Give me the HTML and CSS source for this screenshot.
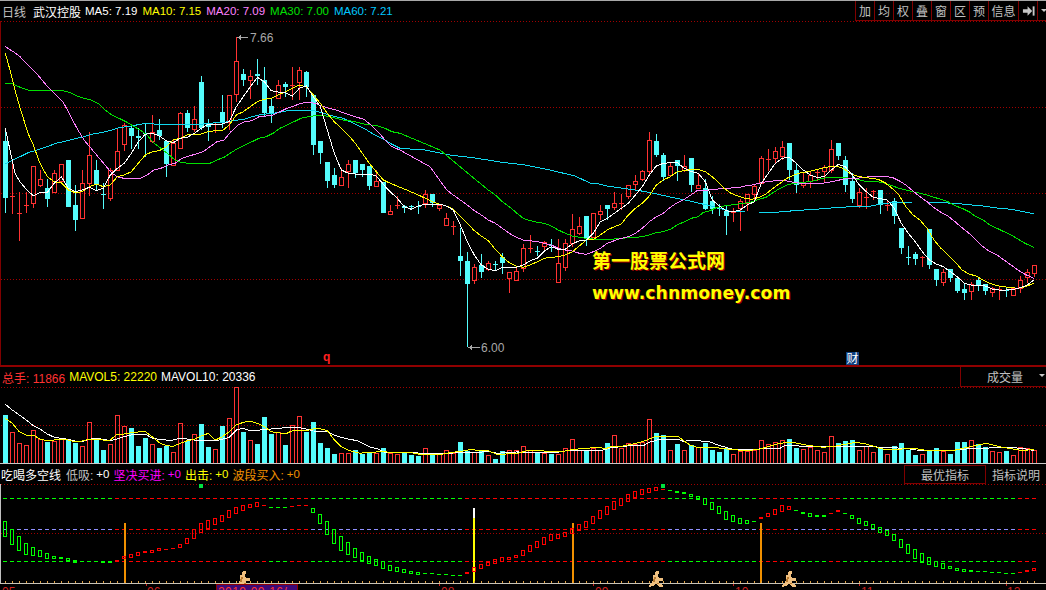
FILE: index.html
```html
<!DOCTYPE html>
<html lang="zh">
<head>
<meta charset="utf-8">
<title>武汉控股 日线</title>
<link rel="stylesheet" href="styles.css">
</head>
<body>
<div class="screen">
  <section class="pane pane-main">
    <header class="head">
      <span class="muted period">日线</span>
      <span class="name">武汉控股</span>
      <span class="c-white ma first">MA5: 7.19</span>
      <span class="c-yellow ma">MA10: 7.15</span>
      <span class="c-pink ma">MA20: 7.09</span>
      <span class="c-green ma">MA30: 7.00</span>
      <span class="c-blue ma">MA60: 7.21</span>
      <nav class="tools">
        <button class="tool">加</button>
        <button class="tool">均</button>
        <button class="tool">权</button>
        <button class="tool">叠</button>
        <button class="tool">窗</button>
        <button class="tool">区</button>
        <button class="tool">预</button>
        <button class="tool tool-wide">信息</button>
        <button class="tool" aria-label="next"><svg class="glyph" viewBox="0 0 14 12"><path d="M1 4h5V1l5 5-5 5V8H1z"/><path d="M11.5 1h2v10h-2z"/></svg></button>
        <button class="tool tool-end" aria-label="menu"><svg class="glyph-small" viewBox="0 0 8 4"><path d="M0 0h8L4 4z"/></svg></button>
      </nav>
    </header>
    <svg id="chart-main" class="chart chart-main" viewBox="0 21 1046 344"></svg>
    <div class="brand">
      <div class="brand-title">第一股票公式网</div>
      <div class="brand-url">www.chnmoney.com</div>
    </div>
  </section>

  <section class="pane pane-vol">
    <header class="head head-vol">
      <span class="c-red">总手: 11866</span>
      <span class="c-yellow">MAVOL5: 22220</span>
      <span class="c-white">MAVOL10: 20336</span>
      <button class="select">成交量<svg class="select-arrow" viewBox="0 0 8 4"><path d="M0 0h8L4 4z"/></svg></button>
    </header>
    <svg id="chart-vol" class="chart chart-vol" viewBox="0 387 1046 76"></svg>
  </section>

  <section class="pane pane-ind">
    <header class="head head-ind">
      <span class="ind-name">吃喝多空线</span>
      <span class="muted low">低吸:</span><span class="c-white val">+0</span>
      <span class="c-magenta">坚决买进:</span><span class="c-magenta val">+0</span>
      <span class="c-yellow">出击:</span><span class="c-yellow val">+0</span>
      <span class="c-orange">波段买入:</span><span class="c-orange val">+0</span>
      <div class="ind-buttons">
        <button class="ind-btn boxed">最优指标</button>
        <button class="ind-btn">指标说明</button>
      </div>
    </header>
    <svg id="chart-ind" class="chart chart-ind" viewBox="0 484 1046 106"></svg>
  </section>
</div>
<script src="script.js"></script>
</body>
</html>
```
FILE: styles.css
```css
* { box-sizing: border-box; }
html, body { margin: 0; padding: 0; background: #000; }
body {
  width: 1046px;
  height: 590px;
  overflow: hidden;
  font-family: "Liberation Sans", "Noto Sans CJK SC", sans-serif;
  font-size: 11.5px;
  color: #c0c0c0;
}
.screen {
  display: flex;
  flex-direction: column;
  width: 1046px;
  height: 590px;
  border-top: 1px solid #a8a8a8;
}
.pane { position: relative; display: flex; flex-direction: column; flex: none; }
.pane-main { height: 366px; border-bottom: 2px solid #900000; }
.pane-vol { height: 97px; border-bottom: 1px solid #c8c8c8; }
.pane-ind { height: 126px; }

.head {
  display: flex;
  align-items: center;
  height: 20px;
  flex: none;
  gap: 5px;
  white-space: nowrap;
  padding-left: 2px;
}
.chart { display: block; flex: none; width: 1046px; }
.chart-main { height: 344px; }
.chart-vol { height: 76px; }
.chart-ind { height: 106px; }

.muted { color: #c0c0c0; }
.name { color: #fff; font-size: 12px; }
.period { font-size: 12px; margin-right: 2px; }
.ma.first { margin-left: -1px; }
.c-white { color: #fff; }
.c-yellow { color: #ff0; }
.c-pink { color: #ff80ff; }
.c-green { color: #00e000; }
.c-blue { color: #00c8ff; }
.c-red { color: #ff3232; }
.c-magenta { color: #f0f; }
.c-orange { color: #f09000; }

.tools { display: flex; margin-left: auto; height: 20px; }
.tool {
  width: 19px;
  height: 20px;
  padding: 0;
  border: 0;
  border-left: 1px solid #800000;
  border-bottom: 1px solid #800000;
  background: #000;
  color: #c0c0c0;
  font: 12px "Noto Sans CJK SC", sans-serif;
  display: flex;
  align-items: center;
  justify-content: center;
}
.tool-wide { width: 30px; }
.tool-end { width: 9px; justify-content: flex-start; padding-left: 3px; }
.glyph { width: 13px; height: 12px; fill: #c8c8c8; }
.glyph-small { width: 6px; height: 3px; fill: #c8c8c8; flex: none; }

.head-vol { gap: 4px; font-size: 12px; }
.select {
  margin-left: auto;
  position: relative;
  width: 86px;
  height: 20px;
  padding: 0 0 0 3px;
  border: 0;
  border-left: 1px solid #800000;
  border-bottom: 1px solid #800000;
  background: #000;
  color: #c0c0c0;
  font: 12px "Noto Sans CJK SC", sans-serif;
}
.select-arrow { position: absolute; right: 1px; top: 7px; width: 6px; height: 3px; fill: #c8c8c8; }

.head-ind { gap: 0; padding-left: 1px; }
.head-ind span { font-size: 12px; }
.head-ind .val { font-size: 11.5px; margin: 0 4px 0 3px; }
.ind-name { color: #fff; }
.low { margin-left: 5px; }
.ind-buttons { display: flex; margin-left: auto; height: 19px; }
.ind-btn {
  width: 60px;
  height: 19px;
  padding: 0;
  border: 0;
  background: #000;
  color: #c0c0c0;
  font: 12px "Noto Sans CJK SC", sans-serif;
}
.boxed { width: 82px; border: 1px solid #800000; }

.brand { position: absolute; left: 592px; top: 245px; color: #ff0; }
.brand-title {
  font: bold 19px/28px "Noto Sans CJK SC", sans-serif;
  text-shadow: 1px 1px 0 #a00000;
}
.brand-url {
  margin-top: 9px;
  font: bold 17.3px/20px "DejaVu Sans", sans-serif;
  text-shadow: 1px 1px 0 #a00000;
}

/* chart marks */
.chart * { shape-rendering: crispEdges; }
.grid { stroke: #a00000; stroke-width: 1; stroke-dasharray: 1 2; fill: none; }
.up { stroke: #ff3232; fill: none; stroke-width: 1; }
.down { fill: #54fcfc; stroke: none; }
.wick-down { stroke: #54fcfc; stroke-width: 1; }
.line { fill: none; stroke-width: 1; }
.l-white { stroke: #fff; }
.l-yellow { stroke: #ff0; }
.l-pink { stroke: #ff80ff; }
.l-green { stroke: #00e000; }
.l-blue { stroke: #10d8f0; }
.vbar-up { stroke: #ff3232; fill: none; }
.vbar-down { fill: #54fcfc; }
.ibar-g { stroke: #00ff00; fill: none; }
.ibar-r { stroke: #ff0000; fill: none; }
.ifill-g { fill: #00ff00; }
.ifill-r { fill: #ff0000; }
.dash-green { fill: #00ff00; }
.dash-red { fill: #ff0000; }
.dash-lav { fill: #9090ff; }
.note { font: 12px "Liberation Sans", sans-serif; fill: #a8a8a8; }
.note-line { stroke: #a8a8a8; }
.note-head { fill: #a8a8a8; }
.q { font: bold 12px "Liberation Sans", sans-serif; fill: #ff2020; }
.fin-box { fill: #104080; }
.fin { font: 12px "Noto Sans CJK SC", sans-serif; fill: #fff; }
.axis { fill: #c8c4b8; }
.tick { fill: #e0a040; }
.mtick { fill: #d02020; }
.date { font: 12px "Liberation Sans", sans-serif; fill: #d02020; }
.date-box { fill: #3c0a78; stroke: #900000; }
.date-now { font: 12px "Liberation Sans", "Noto Sans CJK SC", sans-serif; fill: #ff3232; letter-spacing: .4px; }
.v-orange { fill: #f09000; }
.v-yellow { fill: #ff0; }
.v-white { fill: #fff; }
.sq { fill: #00e040; }
.left-grey { fill: #c0c0c0; }
.left-red { fill: #800000; }
.runner { fill: #f0c080; }
.runner-shade { fill: #b87a30; }
```
FILE: script.js
```js
var NS = 'http://www.w3.org/2000/svg';
function el(parent, tag, cls, attrs, text) {
  var n = document.createElementNS(NS, tag);
  if (cls) n.setAttribute('class', cls);
  for (var k in attrs) n.setAttribute(k, attrs[k]);
  if (text) n.textContent = text;
  parent.appendChild(n);
  return n;
}
function cx(i) { return 5.5 + 7 * i; }
function rect(p, cls, x, y, w, h) { return el(p, 'rect', cls, { x: x, y: y, width: w, height: h }); }

/* candles: colour, body top, body bottom, wick top, wick bottom (page pixels) */
var candles = [
['c',141,198,128,213],['r',196,196,160,214],['r',213,213,192,241],['r',205,205,192,213],['r',166,203,166,208],
['r',179,185,170,187],['c',188,199,179,207],['r',173,192,170,192],['r',164,181,164,181],['c',160,207,160,207],
['c',205,220,185,231],['r',183,218,170,219],['r',155,183,132,196],['c',170,185,160,190],['c',194,194,183,209],
['r',170,198,168,201],['r',151,170,128,170],['r',125,144,123,151],['c',128,136,125,149],['c',136,138,128,149],
['c',133,133,124,157],['r',132,141,115,143],['c',130,136,119,140],['c',141,164,140,177],['r',143,165,140,165],
['r',113,148,112,148],['c',113,128,110,132],['r',119,129,106,132],['c',82,128,76,130],['c',123,127,119,141],
['r',124,124,123,133],['c',112,123,95,128],['r',95,122,95,130],['r',61,94,37,102],['c',74,80,69,86],
['r',76,80,70,99],['c',74,76,59,85],['c',80,113,67,117],['c',106,113,98,123],['r',85,98,80,98],
['c',84,87,82,97],['r',85,85,67,100],['r',70,82,67,100],['c',72,87,71,97],['c',95,145,95,155],
['c',141,153,141,164],['c',162,181,162,188],['c',175,185,168,188],['r',177,185,168,185],['r',164,171,160,188],
['c',160,173,160,178],['c',164,170,164,177],['c',166,186,166,190],['r',181,186,170,187],['c',182,213,182,213],
['r',211,214,205,214],['r',205,205,196,209],['c',206,208,205,213],['c',206,207,205,210],['c',206,206,201,214],
['r',194,203,190,208],['c',194,203,194,207],['r',205,208,205,211],['r',218,225,213,225],['r',226,226,221,235],
['c',256,261,228,276],['c',261,284,252,347],['r',267,280,264,284],['c',265,272,254,278],['r',263,269,261,271],
['c',264,264,261,271],['c',257,263,253,274],['r',272,278,272,293],['r',271,280,268,280],['r',248,268,244,272],
['r',248,248,235,253],['c',251,251,246,256],['r',242,246,241,252],['c',245,245,239,252],['r',263,282,239,282],
['r',243,267,239,271],['r',229,243,214,247],['r',226,233,217,235],['c',216,238,216,246],['r',213,237,213,237],
['r',211,214,205,220],['c',205,209,205,220],['r',203,207,192,210],['r',203,203,194,210],['r',185,196,185,199],
['r',181,184,175,190],['r',171,179,170,181],['r',140,171,132,176],['c',141,155,134,157],['c',155,177,153,181],
['r',166,175,163,175],['c',160,166,160,181],['r',166,170,155,172],['c',158,185,158,192],['r',185,188,174,188],
['c',188,209,179,210],['c',201,209,196,214],['c',208,208,204,216],['c',211,216,206,235],['r',212,212,208,222],
['r',201,208,199,231],['r',194,203,194,211],['r',186,194,184,200],['r',158,183,156,183],['r',159,159,149,171],
['r',151,158,147,163],['r',147,156,141,160],['c',143,170,143,180],['c',170,185,163,193],['r',182,185,172,188],
['r',175,181,172,188],['r',172,172,170,181],['r',167,171,165,183],['r',149,170,140,173],['c',143,156,143,160],
['c',160,185,156,192],['c',181,199,173,203],['r',192,205,188,208],['r',197,197,188,209],['r',191,191,190,200],
['c',190,205,190,214],['r',205,205,200,211],['c',201,216,198,224],['c',228,248,228,254],['c',257,257,246,265],
['c',254,259,252,265],['r',257,257,256,267],['c',229,265,229,269],['c',269,280,269,286],['r',272,282,269,286],
['c',269,278,269,282],['c',278,291,278,293],['c',289,293,283,300],['r',284,291,282,300],['c',280,286,277,291],
['c',284,291,284,295],['r',288,292,287,297],['r',289,289,287,300],['c',290,290,287,297],['r',288,295,287,295],
['r',280,288,276,293],['r',272,277,269,283],['r',265,273,265,277]];

/* volume bar tops, in 1/3 px above page y 360 */
var vol = [
['c',165],['r',217],['r',250],['r',256],['r',210],['r',238],['c',245],['r',242],['r',237],['c',240],
['c',248],['r',258],['r',187],['c',235],['c',270],['r',252],['r',165],['r',198],['c',204],['c',258],
['c',234],['r',252],['c',264],['c',258],['r',277],['r',190],['c',243],['r',222],['c',192],['c',261],
['r',267],['c',198],['r',175],['r',82],['c',216],['r',240],['c',252],['c',171],['c',222],['r',217],
['c',255],['r',196],['r',168],['c',217],['c',186],['c',249],['c',264],['c',282],['r',280],['r',279],
['c',270],['c',282],['c',277],['r',280],['c',264],['r',280],['r',283],['c',277],['c',285],['c',288],
['r',265],['c',282],['r',283],['r',271],['r',280],['c',246],['c',273],['r',277],['c',273],['r',286],
['c',297],['c',273],['r',271],['r',271],['r',259],['r',271],['c',277],['r',279],['c',282],['r',282],
['r',265],['r',238],['r',270],['c',270],['r',264],['r',271],['c',249],['r',226],['r',264],['r',250],
['r',252],['r',246],['r',178],['c',219],['c',226],['r',271],['c',252],['r',271],['c',256],['r',262],
['c',249],['c',270],['c',276],['c',265],['r',283],['r',272],['r',274],['r',271],['r',240],['r',253],
['r',247],['r',241],['c',237],['c',263],['r',268],['r',262],['r',270],['r',276],['r',229],['c',249],
['c',243],['c',240],['r',271],['r',257],['r',277],['c',264],['r',282],['c',259],['c',250],['c',270],
['c',285],['r',282],['c',271],['c',264],['r',274],['c',282],['c',246],['c',246],['r',240],['c',252],
['c',262],['r',273],['r',276],['c',273],['r',285],['r',261],['r',265],['r',270]];

/* indicator bars: colour, top, bottom, in 1/3 px below page y 470 */
var ind = [
['g',153,200],['g',178,225],['g',198,243],['g',220,255],['g',232,258],['g',241,260],['g',250,266],['g',257,266],['g',262,266],['g',265,274],
['g',270,278],['g',273,277],['g',274,274],['g',274,274],['g',273,278],['g',273,278],['r',271,274],['r',258,268],['r',252,263],['r',246,257],
['r',243,250],['r',240,248],['r',235,242],['r',237,237],['r',235,235],['r',222,233],['r',205,221],['r',178,206],['r',160,190],['r',151,178],
['r',144,164],['r',136,155],['r',121,143],['r',110,131],['r',106,122],['r',101,114],['r',96,110],['r',105,105],['g',110,110],['g',112,112],
['g',112,112],['r',108,108],['r',106,106],['r',106,106],['g',115,128],['g',133,161],['g',153,194],['g',178,221],['g',199,242],['g',217,254],
['g',235,264],['g',246,274],['g',258,282],['g',268,288],['g',274,297],['g',286,302],['g',292,305],['g',298,308],['g',304,311],['g',307,314],
['g',310,310],['g',310,310],['g',313,313],['g',313,313],['g',316,316],['g',316,316],['r',307,311],['r',291,305],['r',283,296],['r',275,287],
['r',268,281],['r',262,275],['r',262,270],['r',256,263],['r',241,257],['r',226,245],['r',214,233],['r',202,224],['r',193,212],['r',193,206],
['r',187,200],['r',175,191],['r',163,182],['r',154,173],['r',139,161],['r',121,146],['r',109,134],['r',94,119],['r',85,107],['r',73,95],
['r',64,85],['r',58,74],['r',55,68],['r',52,62],['r',58,58],['g',61,61],['g',64,68],['g',67,71],['g',73,80],['g',79,89],
['g',85,104],['g',97,119],['g',109,131],['g',124,150],['g',136,155],['g',145,161],['g',151,161],['g',154,154],['r',142,146],['r',130,140],
['r',118,134],['r',106,125],['r',109,119],['g',121,121],['g',127,131],['g',130,140],['g',136,140],['g',136,140],['r',130,130],['r',121,127],
['g',130,130],['g',136,146],['g',145,161],['g',154,169],['g',163,178],['g',172,188],['g',181,199],['g',193,212],['g',208,233],['g',223,251],
['g',238,266],['g',250,278],['g',262,284],['g',274,290],['g',280,296],['g',289,298],['g',295,304],['g',298,307],['g',301,305],['g',304,304],
['g',304,304],['g',307,307],['g',307,307],['g',310,310],['g',310,310],['r',307,307],['r',301,305],['r',295,302]];

/* line pieces: [page x origin, page y origin, flat list of x,y in 1/3 px] */
var lines = {
 'l-blue': [[0,0,[16,492,40,480,60,470,84,458,105,452,126,445,147,438,168,430,189,425,210,420,231,415,252,410,273,403,294,400,315,395,336,390,357,383,378,380,399,377,420,373,441,370,462,372,483,372,504,372,525,372,546,372,567,372,588,372,609,372,630,370,651,368,672,367,693,363,714,360,735,357,756,350,777,345,798,342,819,340,840,337,861,332,882,330,903,330,924,330,945,333,966,338,987,345,1008,350,1029,355,1050,365,1071,375,1092,385,1113,398,1134,410,1155,420,1176,433,1200,445,1275,450,1350,465,1425,474,1500,486,1575,495,1650,510,1725,528,1770,549]],
   [590,120,[20,190,50,198,100,205,150,212,200,222,250,233,300,243,350,255,390,265]],
   [696,120,[105,275,147,276,189,276,250,276,294,272,357,268,399,265,420,262,483,260,525,258,567,250,609,247,651,246,693,246,735,248,777,250,819,254,861,258,903,264,945,268,987,276,1014,281]]],
 'l-green': [[0,0,[16,250,40,252,60,262,84,270,105,272,126,272,147,273,168,272,189,272,210,278,231,288,252,295,273,300,294,310,315,330,336,345,357,355,378,365,399,378,420,390,441,405,462,430,483,445,504,462,525,480,546,488,567,490,588,490,609,490,630,490,651,480,672,472,693,458,714,445,735,435,756,425,777,415,798,410,819,400,840,385,861,375,882,365,903,355,924,350,945,347,966,345,987,350,1008,355,1029,360,1050,362,1071,367,1092,372,1113,375,1134,378,1155,385,1176,395,1200,400,1320,450,1410,525]],
   [350,190,[415,0,436,15,457,35,478,50,499,68,520,85,541,92,562,97,583,100,604,108,625,120,646,130,667,138,688,142,709,145,730,147,751,147,772,147,793,147,814,145,835,143,856,142,877,140,898,135,919,128,940,125,961,118,982,105,1003,95,1024,85,1044,80]],
   [696,120,[21,278,42,272,63,262,84,258,105,255,126,252,147,250,168,245,189,238,210,232,231,218,252,205,273,195,294,190,315,188,336,185,357,182,378,175,399,173,420,172,441,172,462,175,483,178,504,183,525,183,546,185,567,190,588,197,609,205,630,210,651,215,672,220,693,225,714,232,735,238,756,245,777,257,798,265,819,275,840,290,861,300,882,315,903,325,924,335,945,345,966,357,987,370,1014,382]]],
 'l-pink': [[0,0,[16,140,40,155,60,170,84,195,105,215,126,240,147,265,168,285,189,305,210,345,231,385,252,420,273,445,294,470,315,495,336,520,357,533,378,535,399,535,420,535,441,525,462,510,483,505,504,495,525,490,546,475,567,468,588,462,609,455,630,440,651,425,672,420,693,395,714,375,735,365,756,362,777,350,798,348,819,345,840,335,861,325,882,318,903,310,924,307,945,310,966,318,987,325,1008,330,1029,338,1050,345,1071,352,1092,358,1113,375,1134,395,1155,420,1176,440,1200,450,1290,500]],
   [350,190,[290,0,310,15,331,30,352,45,373,62,394,75,415,90,436,100,457,115,478,130,499,142,520,150,541,152,562,155,583,160,604,165,625,175,646,180,667,183,688,190,709,193,730,185,751,175,772,160,793,152,814,145,835,140,856,130,877,115,898,95,919,80,940,70,961,52,982,38,1003,28,1030,10,1040,3]],
   [696,120,[0,213,40,210,84,205,126,203,147,198,168,195,189,190,210,185,231,183,252,180,273,183,294,187,315,190,336,190,357,190,378,190,399,187,420,182,441,178,462,175,483,175,504,172,525,170,546,170,567,170,588,172,609,182,630,195,651,213,672,230,693,245,714,263,735,277,756,288,777,305,798,323,819,340,840,360,861,380,882,395,903,405,924,420,945,435,966,450,987,463,1014,475]]],
 'l-yellow': [[0,0,[16,160,30,210,45,270,62,330,84,400,100,435,120,490,142,530,163,545,184,548,205,570,226,578,247,575,268,560,289,552,310,560,331,555,352,530,373,525,394,515,415,490,436,465,457,455,478,452,499,440,520,420,541,415,562,405,583,403,604,402,625,395,646,392,667,392,688,375,709,345,730,335,751,320,772,305,793,298,814,295,835,285,856,275,877,265,898,255,919,260,940,285,961,310,982,340,1003,365,1024,385,1045,405,1066,430,1087,460,1108,490,1129,515,1150,540,1171,550]],
   [350,190,[170,0,205,15,226,25,247,35,268,42,289,48,310,58,331,78,352,100,373,122,394,138,415,152,436,178,457,200,478,218,499,228,520,232,541,225,562,215,583,205,604,202,625,200,646,195,667,185,688,168,709,150,730,148,751,135,772,120,793,110,814,102,835,75,856,55,877,40,898,18]],
   [590,120,[199,195,220,180,241,170,262,155,283,152,304,148,325,148,346,155,367,170,388,190]],
   [696,120,[84,205,105,220,126,228,147,235,168,238,189,232,210,222,231,205,252,190,273,175,294,165,315,158,336,155,357,150,378,145,399,140,420,138,441,145,462,160,483,168,504,172,525,175,546,178,567,188,588,205,609,225,630,260,651,285,672,300,693,325,714,360,735,385,756,405,777,425,798,450,819,462,840,468,861,480,882,490,903,497,924,500,945,503,966,505,987,500,1014,490]]],
 'l-white': [[0,100,[16,85,30,150,45,220,60,245,80,270,100,287,120,278,142,277,163,250,184,230,205,265,226,275,247,270,268,262,289,272,310,265,331,225,352,205,373,190,394,160,415,125,436,103,457,100,478,108,499,122,520,128,541,115,562,112,583,100,604,85,625,72,646,72,667,72,688,65]],
   [0,0,[709,320,730,290,751,260,772,232,793,245,814,272,835,276,856,278,877,288,898,265,919,258,940,290,961,320,982,390,1003,460,1024,510,1045,520,1066,522,1087,522,1108,522,1129,528]],
   [350,190,[115,0,142,25,163,50,184,58,205,48,226,42,247,42,268,42,289,48,310,60,331,105,352,155,373,195,394,225,415,238,436,242,457,232,478,232,499,232,520,225,541,212,562,205,583,183,604,170,625,178,646,178,667,162,688,152,709,150,730,130,751,95,772,85,793,70,814,55,835,40,856,15]],
   [590,120,[157,200,178,165,199,138,220,130,241,128,262,128,283,145,304,155,325,160,346,185]],
   [696,120,[49,240,70,258,91,272,112,275,133,270,154,255,175,245,196,190,217,160,238,130,259,115,280,112,301,130,322,150,343,165,364,172,385,170,406,150,427,133,448,140,469,165,490,195,511,215,532,232,553,236,574,240,595,265,616,310,637,340,658,365,679,395,700,420,721,432,742,440,763,455,784,470,805,490,826,495,847,495,868,498,889,507,910,510,931,510,952,508,973,503,994,495,1014,480]]]
};
var volLines = {
 'l-white': [[0,360,[16,133,37,150,58,165,79,180,100,197,121,208,142,222,163,232,184,235,205,238,226,243,247,245,268,238,289,235,310,238,331,242,352,237,373,230,394,225,415,222,436,222,457,235,478,238,499,240,520,240,541,235,562,237,583,240,604,242,625,242,646,243,667,238,688,232,709,210,730,205,751,212,772,212,793,207,814,207,835,205,856,203,877,203,898,203,919,207,940,213,961,214,982,215,1003,225,1024,232,1040,236]],
   [350,360,[0,238,21,242,42,252,63,262,84,267,105,277,190,277,210,280,280,280,340,278,420,275,441,280,500,276,620,277,650,272,700,270,760,270,784,263,830,258,880,257,900,246,930,238,985,238,1003,245,1014,241,1030,241]],
   [696,360,[40,245,65,255,90,262,110,268,180,268,200,266,250,266,270,255,310,258,420,258,520,258,550,262,630,265,660,270,770,272,790,268,860,265,920,262,980,265,1014,272]]],
 'l-yellow': [[0,360,[16,175,37,190,58,215,79,225,100,225,121,238,142,242,163,240,184,238,205,240,226,246,247,243,268,237,289,237,310,240,331,240,352,222,373,222,394,218,415,216,436,215,457,230,478,248,499,257,520,259,541,250,562,242,583,238,604,228,625,220,646,240,667,230,688,215,709,195,730,187,751,184,772,190,793,200,814,215,835,218,856,222,877,212,898,212,919,212,940,207,961,206,982,212,1003,240,1024,260,1040,268]],
   [350,360,[0,272,30,280,50,277,105,275,125,278,190,279,210,283,270,284,300,278,345,272,365,268,385,272,415,272,440,283,465,283,475,280,505,280,530,272,570,272,605,275,635,275,660,270,700,265,740,263,770,265,790,258,820,258,850,252,870,247,890,240,915,230,985,230,1005,245,1020,255,1040,262]],
   [696,360,[50,262,100,268,150,272,190,268,250,250,290,247,330,255,380,262,420,258,480,247,510,252,570,270,650,265,700,272,770,272,800,265,870,250,920,262,980,272,1014,268]]]
};

function drawLines(svg, table) {
  Object.keys(table).forEach(function (cls) {
    var pts = [];
    table[cls].forEach(function (piece) {
      for (var i = 0; i < piece[2].length; i += 2) {
        pts.push((piece[0] + piece[2][i] / 3).toFixed(1) + ',' + (piece[1] + piece[2][i + 1] / 3).toFixed(1));
      }
    });
    el(svg, 'polyline', 'line ' + cls, { points: pts.join(' ') });
  });
}
function grid(svg, ys) {
  ys.forEach(function (y) {
    el(svg, 'line', 'grid', { x1: 1, x2: 1046, y1: y + .5, y2: y + .5 });
  });
}

/* main */
var m = document.getElementById('chart-main');
rect(m, 'left-red', 0, 21, 1, 344);
grid(m, [21, 107, 193, 279]);
candles.forEach(function (d, i) {
  var c = cx(i), col = d[0], t = d[1], b = d[2], wt = d[3], wb = d[4];
  if (col === 'r') {
    if (wt < t) el(m, 'line', 'up', { x1: c, x2: c, y1: wt, y2: t });
    if (wb > b) el(m, 'line', 'up', { x1: c, x2: c, y1: b, y2: wb });
    if (b - t < 1) el(m, 'line', 'up', { x1: c - 2.5, x2: c + 2.5, y1: t + .5, y2: t + .5 });
    else el(m, 'rect', 'up', { x: c - 2, y: t + .5, width: 4, height: b - t });
  } else {
    el(m, 'line', 'wick-down', { x1: c, x2: c, y1: wt, y2: wb });
    rect(m, 'down', c - 2.5, t, 5, Math.max(1, b - t));
  }
});
drawLines(m, lines);
el(m, 'line', 'note-line', { x1: 238, x2: 248, y1: 37.5, y2: 37.5 });
el(m, 'path', 'note-head', { d: 'M237 37.5l4-2.5v5z' });
el(m, 'text', 'note', { x: 250, y: 42 }, '7.66');
el(m, 'line', 'note-line', { x1: 469, x2: 480, y1: 347.5, y2: 347.5 });
el(m, 'path', 'note-head', { d: 'M468 347.5l4-2.5v5z' });
el(m, 'text', 'note', { x: 481, y: 352 }, '6.00');
el(m, 'text', 'q', { x: 323, y: 361 }, 'q');
rect(m, 'fin-box', 846, 352, 13, 13);
el(m, 'text', 'fin', { x: 846.5, y: 363 }, '财');

/* volume */
var v = document.getElementById('chart-vol');
grid(v, [387, 425]);
vol.forEach(function (d, i) {
  var c = cx(i), top = Math.round(360 + d[1] / 3);
  if (d[0] === 'r') el(v, 'rect', 'vbar-up', { x: c - 2, y: top + .5, width: 4, height: 463 - top });
  else rect(v, 'vbar-down', c - 2.5, top, 5, 463 - top);
});
drawLines(v, volLines);

/* indicator */
var s = document.getElementById('chart-ind');
rect(s, 'left-grey', 0, 484, 1, 99);
grid(s, [484, 533]);
ind.forEach(function (d, i) {
  var x = cx(i) - 2.5;
  var g = d[0] === 'g';
  rect(s, g ? 'dash-green' : 'dash-red', x, 498, 4, 1);
  rect(s, g ? 'dash-lav' : 'dash-red', x, 529, 4, 1);
  rect(s, g ? 'dash-green' : 'dash-red', x, 561, 4, 1);
});
[[124, 523, 60, 'v-orange'], [572, 523, 60, 'v-orange'], [760, 523, 60, 'v-orange'], [473, 518, 65, 'v-yellow'], [473, 508, 10, 'v-white']].forEach(function (a) {
  rect(s, a[3], a[0], a[1], 2, a[2]);
});
ind.forEach(function (d, i) {
  var x = cx(i) - 2.5, t = Math.round(470 + d[1] / 3), b = Math.round(470 + d[2] / 3), g = d[0] === 'g';
  if (b - t < 1) rect(s, g ? 'ifill-g' : 'ifill-r', x, t, 4, 1);
  else if (b - t < 3) rect(s, g ? 'ifill-g' : 'ifill-r', x, t, 4, b - t);
  else el(s, 'rect', g ? 'ibar-g' : 'ibar-r', { x: x + .5, y: t + .5, width: 3, height: b - t - 1 });
});
rect(s, 'sq', 199, 484, 4, 4);
rect(s, 'sq', 661, 484, 4, 4);
for (var t = 0; t < 148; t++) rect(s, 'tick', Math.floor(cx(t)), 581, 1, 2);
rect(s, 'axis', 0, 583, 1046, 1);
[146, 439, 593, 733, 859, 1006].forEach(function (x) { rect(s, 'mtick', x, 584, 1, 2); });
[243, 656, 789].forEach(function (a) {
  var g = el(s, 'g', '', { transform: 'translate(' + a + ' 583)' });
  el(g, 'circle', 'runner', { cx: 1, cy: -10, r: 2 });
  el(g, 'path', 'runner', { d: 'M-3-8L2-7.5 3-5H7V-2.5L3-2V0L7 2V4H3L0 1-3 3-7 4V2L-4 0-3-4z' });
  el(g, 'path', 'runner-shade', { d: 'M-2-6H0L-1-1H-3zM1 0H3V1H1z' });
});
[['05', 2], ['06', 147], ['08', 441], ['09', 595], ['10', 735], ['11', 861], ['12', 1007]].forEach(function (a) {
  el(s, 'text', 'date', { x: a[1], y: 596 }, a[0]);
});
el(s, 'rect', 'date-box', { x: 216.5, y: 584.5, width: 81, height: 10 });
el(s, 'text', 'date-now', { x: 218, y: 596 }, '2019-09-16/一');
```
